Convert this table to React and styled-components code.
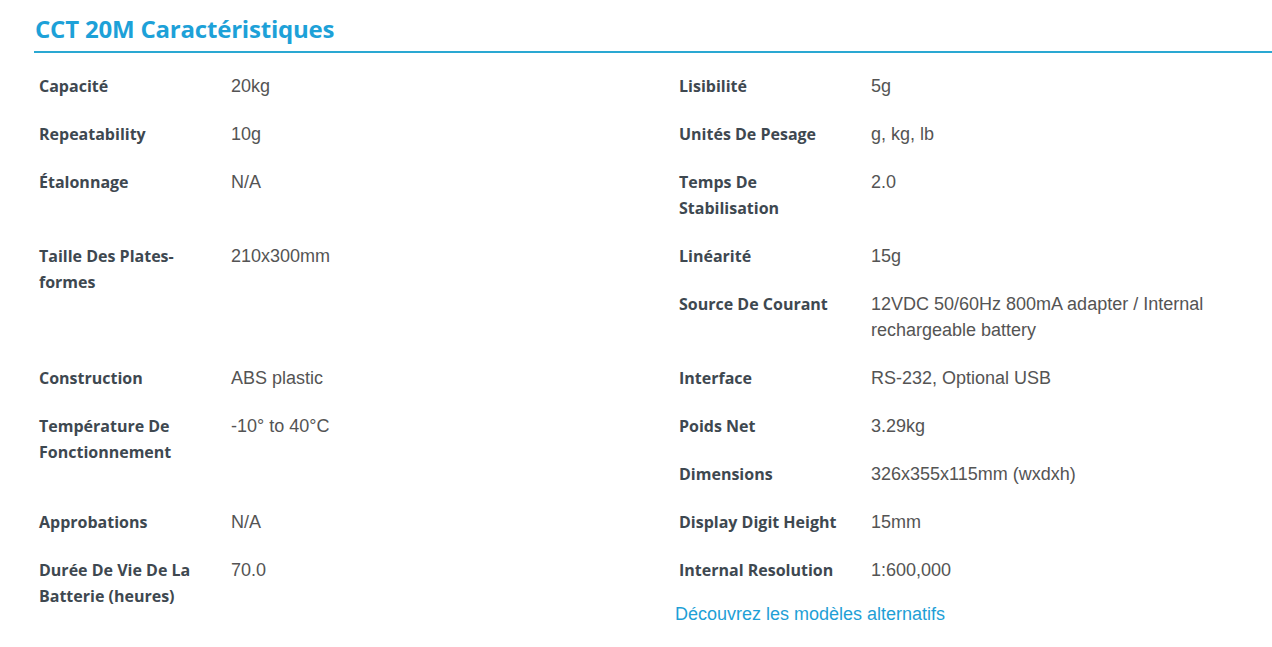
import React from "react";
import styled, { createGlobalStyle } from "styled-components";

const Global = createGlobalStyle`
  html, body { margin: 0; padding: 0; background: #fff; overflow-x: hidden; }
  body { font-family: "Liberation Sans", Arial, sans-serif; }
`;

const Section = styled.section`
  margin-left: 34px;
  padding-top: 14px;
`;

const Title = styled.h2`
  margin: 0;
  padding: 0 0 7px 1px;
  font-family: "Open Sans", Lato, sans-serif;
  font-weight: 700;
  font-size: 24px;
  line-height: 30px;
  letter-spacing: -0.2px;
  color: #1da1d8;
  border-bottom: 2px solid #2aa8d2;
`;

const Grid = styled.dl`
  margin: 9px 0 0;
  display: grid;
  grid-template-columns: 640px 1fr;
  grid-auto-rows: auto;
  align-items: start;
`;

const Cell = styled.div`
  grid-column: ${(p) => p.$col};
  grid-row: ${(p) => p.$row} / span ${(p) => p.$span || 1};
`;

const Item = styled.div`
  display: grid;
  grid-template-columns: 197px 1fr;
  padding: 11px 0;
`;

const Label = styled.dt`
  margin: 0;
  padding: 0 20px 0 5px;
  font-family: "Open Sans", Lato, sans-serif;
  font-weight: 700;
  font-size: 16px;
  line-height: 26px;
  color: #3e4850;
`;

const Value = styled.dd`
  margin: 0;
  padding-right: 60px;
  font-family: "Liberation Sans", Arial, sans-serif;
  font-size: 18px;
  line-height: 26px;
  color: #545454;
`;

const LinkRow = styled.div`
  padding: 7px 0 0 1px;
`;

const Link = styled.a`
  font-family: "Liberation Sans", Arial, sans-serif;
  font-size: 18px;
  line-height: 26px;
  color: #1ea0d6;
  text-decoration: none;
`;

const left = [
  ["Capacité", "20kg", 1, 1],
  ["Repeatability", "10g", 2, 1],
  ["Étalonnage", "N/A", 3, 1],
  ["Taille Des Plates-formes", "210x300mm", 4, 2],
  ["Construction", "ABS plastic", 6, 1],
  ["Température De Fonctionnement", "-10° to 40°C", 7, 2],
  ["Approbations", "N/A", 9, 1],
  ["Durée De Vie De La Batterie (heures)", "70.0", 10, 1],
];

const right = [
  ["Lisibilité", "5g", 1],
  ["Unités De Pesage", "g, kg, lb", 2],
  ["Temps De Stabilisation", "2.0", 3],
  ["Linéarité", "15g", 4],
  ["Source De Courant", "12VDC 50/60Hz 800mA adapter / Internal rechargeable battery", 5],
  ["Interface", "RS-232, Optional USB", 6],
  ["Poids Net", "3.29kg", 7],
  ["Dimensions", "326x355x115mm (wxdxh)", 8],
  ["Display Digit Height", "15mm", 9],
  ["Internal Resolution", "1:600,000", 10, true],
];

export default function App() {
  return (
    <>
      <Global />
      <Section>
        <Title>CCT 20M Caractéristiques</Title>
        <Grid>
          {left.map(([l, v, r, s]) => (
            <Cell key={l} $col={1} $row={r} $span={s}>
              <Item>
                <Label>{l}</Label>
                <Value>{v}</Value>
              </Item>
            </Cell>
          ))}
          {right.map(([l, v, r, last]) => (
            <Cell key={l} $col={2} $row={r}>
              <Item>
                <Label>{l}</Label>
                <Value>{v}</Value>
              </Item>
              {last && (
                <LinkRow>
                  <Link href="#">Découvrez les modèles alternatifs</Link>
                </LinkRow>
              )}
            </Cell>
          ))}
        </Grid>
      </Section>
    </>
  );
}
